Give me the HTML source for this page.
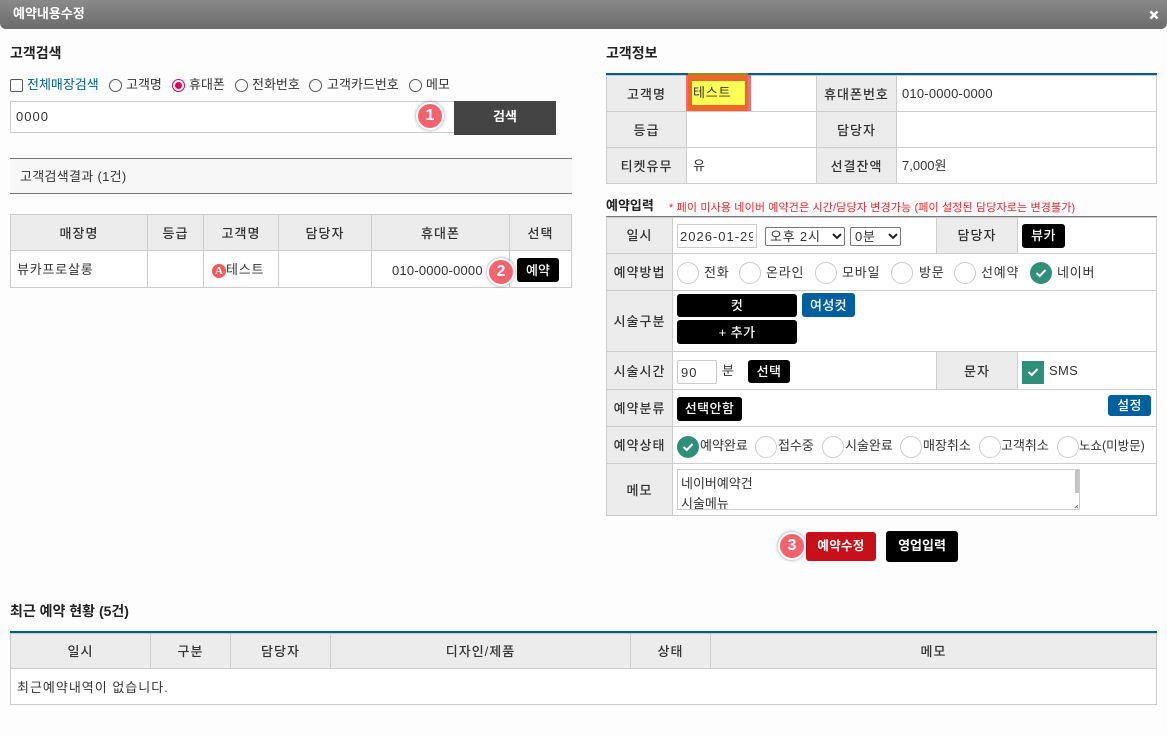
<!DOCTYPE html>
<html lang="ko"><head><meta charset="utf-8"><title>예약내용수정</title>
<style>
html,body{margin:0;padding:0;width:1167px;height:735px;overflow:hidden;background:#fdfdfd}
body{position:relative;font-family:"Liberation Sans","Noto Sans CJK KR",sans-serif;font-size:13px;color:#333}
div{position:absolute;box-sizing:border-box;white-space:nowrap}
.t{line-height:18px;height:18px;margin-top:1px}
.l{letter-spacing:.8px}
.b{font-weight:700;color:#222;font-size:14px}
.c{background:#fff;border:1px solid #ccc}
.h{background:#ececec;border:1px solid #ccc;text-align:center;color:#333;font-weight:500;letter-spacing:1px;padding-top:1px}
.btn{background:#000;color:#fff;border-radius:3px;text-align:center;font-weight:500;letter-spacing:.4px}
.blue{background:#005f9e;color:#fff;border-radius:3px;text-align:center;font-weight:500;letter-spacing:.4px}
.r{width:22px;height:22px;border-radius:50%;border:1px solid #ccc;background:#fff}
.g{width:22px;height:22px;border-radius:50%;background:#2f8f77}
.g svg,.s svg{position:absolute;left:5px;top:6px}
.s{width:22px;height:23px;background:#2f8f77}
.n{width:28px;height:28px;border-radius:50%;background:#f2636d;border:2px solid #fff;box-shadow:0 0 3px rgba(0,0,0,.45);color:#fff;font-weight:700;font-size:16px;line-height:24px;text-align:center;z-index:5}
.rd{width:13px;height:13px;border-radius:50%;border:1px solid #555;background:#fff}
</style></head><body>

<div style="left:0;top:0;width:1167px;height:29px;background:linear-gradient(#8a8a8a,#6b6b6b);border-radius:0 0 6px 6px"></div>
<div class="t" style="left:13px;top:4px;color:#fff;font-weight:700;font-size:13px">예약내용수정</div>
<svg style="position:absolute;left:1149px;top:10px" width="10" height="10"><path d="M1.5 1.5L8.5 8.5M8.5 1.5L1.5 8.5" stroke="#fff" stroke-width="2.6"/></svg>

<!-- left -->
<div class="t b" style="left:10px;top:43px">고객검색</div>
<div style="left:10px;top:79px;width:13px;height:13px;border:1px solid #555;border-radius:2px;background:#fff"></div>
<div class="t" style="left:27px;top:75px;color:#005f8e">전체매장검색</div>
<div class="rd" style="left:109px;top:79px"></div><div class="t" style="left:126px;top:75px">고객명</div>
<div class="rd" style="left:172px;top:79px;border:1px solid #d6005a"></div><div style="left:175px;top:82px;width:7px;height:7px;border-radius:50%;background:#e0005e"></div><div class="t" style="left:189px;top:75px">휴대폰</div>
<div class="rd" style="left:235px;top:79px"></div><div class="t" style="left:252px;top:75px">전화번호</div>
<div class="rd" style="left:309px;top:79px"></div><div class="t" style="left:327px;top:75px">고객카드번호</div>
<div class="rd" style="left:409px;top:79px"></div><div class="t" style="left:426px;top:75px">메모</div>

<div class="c" style="left:10px;top:101px;width:445px;height:32px;padding-left:5px;line-height:29px;color:#333;letter-spacing:1px">0000</div>
<div style="left:454px;top:101px;width:102px;height:34px;background:#444;color:#fff;text-align:center;line-height:32px;font-weight:700;font-size:13px">검색</div>
<div class="n" style="left:416px;top:102px">1</div>

<div style="left:10px;top:158px;width:562px;height:36px;background:#f7f7f7;border-top:1px solid #777;border-bottom:1px solid #777;padding-left:10px;line-height:35px;font-size:13px;letter-spacing:.3px">고객검색결과 (1건)</div>

<div class="h" style="left:10px;top:214px;width:138px;height:37px;line-height:35px">매장명</div>
<div class="h" style="left:147px;top:214px;width:57px;height:37px;line-height:35px">등급</div>
<div class="h" style="left:203px;top:214px;width:76px;height:37px;line-height:35px">고객명</div>
<div class="h" style="left:278px;top:214px;width:94px;height:37px;line-height:35px">담당자</div>
<div class="h" style="left:371px;top:214px;width:139px;height:37px;line-height:35px">휴대폰</div>
<div class="h" style="left:509px;top:214px;width:63px;height:37px;line-height:35px">선택</div>
<div class="c" style="left:10px;top:250px;width:138px;height:38px;padding-left:6px;line-height:38px;letter-spacing:.8px">뷰카프로살롱</div>
<div class="c" style="left:147px;top:250px;width:57px;height:38px"></div>
<div class="c" style="left:203px;top:250px;width:76px;height:38px"></div>
<div class="c" style="left:278px;top:250px;width:94px;height:38px"></div>
<div class="c" style="left:371px;top:250px;width:139px;height:38px"></div>
<div class="c" style="left:509px;top:250px;width:63px;height:38px"></div>
<div style="left:212px;top:264px;width:14px;height:14px;border-radius:50%;background:#ef5a5a;color:#fff;font:700 11px/14px 'Liberation Serif',serif;text-align:center">A</div>
<div class="t l" style="left:226px;top:260px">테스트</div>
<div class="t" style="left:392px;top:261px;letter-spacing:.2px">010-0000-0000</div>
<div class="btn" style="left:517px;top:258px;width:42px;height:24px;line-height:25px;font-size:13px;letter-spacing:0">예약</div>
<div class="n" style="left:487px;top:258px">2</div>

<!-- customer info -->
<div class="t b" style="left:606px;top:43px">고객정보</div>
<div class="h" style="left:606px;top:75px;width:81px;height:37px;line-height:35px">고객명</div>
<div class="c" style="left:686px;top:75px;width:131px;height:37px"></div>
<div class="h" style="left:816px;top:75px;width:81px;height:37px;line-height:35px">휴대폰번호</div>
<div class="c" style="left:896px;top:75px;width:261px;height:37px;padding-left:5px;line-height:36px;font-size:13px;letter-spacing:.2px">010-0000-0000</div>
<div class="h" style="left:606px;top:111px;width:81px;height:37px;line-height:35px">등급</div>
<div class="c" style="left:686px;top:111px;width:131px;height:37px"></div>
<div class="h" style="left:816px;top:111px;width:81px;height:37px;line-height:35px">담당자</div>
<div class="c" style="left:896px;top:111px;width:261px;height:37px"></div>
<div class="h" style="left:606px;top:147px;width:81px;height:37px;line-height:35px">티켓유무</div>
<div class="c" style="left:686px;top:147px;width:131px;height:37px;padding-left:6px;line-height:35px">유</div>
<div class="h" style="left:816px;top:147px;width:81px;height:37px;line-height:35px">선결잔액</div>
<div class="c" style="left:896px;top:147px;width:261px;height:37px;padding-left:5px;line-height:35px;font-size:13px">7,000원</div>
<div style="left:606px;top:73px;width:551px;height:2px;background:#005b8e"></div>
<div style="left:686px;top:75px;width:65px;height:36px;background:#e8707a"></div>
<div style="left:688px;top:73px;width:60px;height:38px;background:#f0662a"></div>
<div style="left:688px;top:73px;width:60px;height:2px;background:#7d9a1e"></div>
<div style="left:692px;top:81px;width:53px;height:24px;background:#ffff55;padding-left:1px;line-height:24px;color:#333;letter-spacing:.8px">테스트</div>

<!-- reservation input -->
<div class="t b" style="left:606px;top:196px;font-size:13px">예약입력</div>
<div class="t" style="left:669px;top:198px;color:#e8262c;font-size:11px;letter-spacing:.14px">* 페이 미사용 네이버 예약건은 시간/담당자 변경가능 (페이 설정된 담당자로는 변경불가)</div>

<div class="h" style="left:606px;top:217px;width:67px;height:37px;line-height:34px">일시</div>
<div class="c" style="left:672px;top:217px;width:265px;height:37px"></div>
<div class="h" style="left:936px;top:217px;width:82px;height:37px;line-height:34px">담당자</div>
<div class="c" style="left:1017px;top:217px;width:140px;height:37px"></div>
<div style="left:606px;top:216px;width:551px;height:1px;background:#777"></div>

<div class="h" style="left:606px;top:253px;width:67px;height:38px;line-height:36px">예약방법</div>
<div class="c" style="left:672px;top:253px;width:485px;height:38px"></div>
<div class="h" style="left:606px;top:290px;width:67px;height:62px;line-height:60px">시술구분</div>
<div class="c" style="left:672px;top:290px;width:485px;height:62px"></div>
<div class="h" style="left:606px;top:351px;width:67px;height:39px;line-height:37px">시술시간</div>
<div class="c" style="left:672px;top:351px;width:265px;height:39px"></div>
<div class="h" style="left:936px;top:351px;width:82px;height:39px;line-height:37px">문자</div>
<div class="c" style="left:1017px;top:351px;width:140px;height:39px"></div>
<div class="h" style="left:606px;top:389px;width:67px;height:38px;line-height:36px">예약분류</div>
<div class="c" style="left:672px;top:389px;width:485px;height:38px"></div>
<div class="h" style="left:606px;top:426px;width:67px;height:38px;line-height:36px">예약상태</div>
<div class="c" style="left:672px;top:426px;width:485px;height:38px"></div>
<div class="h" style="left:606px;top:463px;width:67px;height:53px;line-height:51px">메모</div>
<div class="c" style="left:672px;top:463px;width:485px;height:53px"></div>

<div class="c" style="left:677px;top:224px;width:80px;height:24px"><div style="left:2px;top:0;width:73px;height:22px;line-height:23px;overflow:hidden;letter-spacing:1px">2026-01-29</div></div>
<div style="left:765px;top:227px;width:80px;height:19px;background:#fff;border:1px solid #777;border-radius:2px;padding-left:4px;line-height:18px;letter-spacing:.8px">오후 2시</div>
<svg style="position:absolute;left:832px;top:233px" width="10" height="7"><path d="M1 1L5 5L9 1" fill="none" stroke="#222" stroke-width="2"/></svg>
<div style="left:850px;top:227px;width:51px;height:19px;background:#fff;border:1px solid #777;border-radius:2px;padding-left:4px;line-height:18px;letter-spacing:.8px">0분</div>
<svg style="position:absolute;left:888px;top:233px" width="10" height="7"><path d="M1 1L5 5L9 1" fill="none" stroke="#222" stroke-width="2"/></svg>
<div class="btn" style="left:1022px;top:224px;width:43px;height:24px;line-height:24px">뷰카</div>

<div class="r" style="left:677px;top:262px"></div><div class="t l" style="left:704px;top:263px">전화</div>
<div class="r" style="left:739px;top:262px"></div><div class="t l" style="left:766px;top:263px">온라인</div>
<div class="r" style="left:815px;top:262px"></div><div class="t l" style="left:842px;top:263px">모바일</div>
<div class="r" style="left:891px;top:262px"></div><div class="t l" style="left:919px;top:263px">방문</div>
<div class="r" style="left:954px;top:262px"></div><div class="t l" style="left:981px;top:263px">선예약</div>
<div class="g" style="left:1030px;top:262px"><svg width="12" height="10"><path d="M1.5 5L4.8 8L10.5 2" fill="none" stroke="#fff" stroke-width="2"/></svg></div><div class="t l" style="left:1057px;top:263px">네이버</div>

<div class="btn" style="left:677px;top:294px;width:120px;height:23px;line-height:24px">컷</div>
<div class="blue" style="left:802px;top:293px;width:53px;height:24px;line-height:25px">여성컷</div>
<div class="btn" style="left:677px;top:320px;width:120px;height:24px;line-height:25px">+ 추가</div>

<div style="left:677px;top:360px;width:40px;height:24px;background:#fff;border:1px solid #ccc;border-radius:2px;padding-left:3px;line-height:23px;letter-spacing:1px">90</div>
<div class="t" style="left:722px;top:361px">분</div>
<div class="btn" style="left:748px;top:360px;width:42px;height:23px;line-height:24px">선택</div>
<div class="s" style="left:1022px;top:361px"><svg width="12" height="10"><path d="M1.5 5L4.8 8L10.5 2" fill="none" stroke="#fff" stroke-width="2"/></svg></div>
<div class="t" style="left:1049px;top:361px;letter-spacing:.3px">SMS</div>

<div class="btn" style="left:677px;top:397px;width:65px;height:24px;line-height:24px">선택안함</div>
<div class="blue" style="left:1108px;top:395px;width:43px;height:21px;line-height:22px">설정</div>

<div class="g" style="left:677px;top:436px"><svg width="12" height="10"><path d="M1.5 5L4.8 8L10.5 2" fill="none" stroke="#fff" stroke-width="2"/></svg></div><div class="t" style="left:700px;top:436px">예약완료</div>
<div class="r" style="left:755px;top:436px"></div><div class="t" style="left:778px;top:436px">접수중</div>
<div class="r" style="left:822px;top:436px"></div><div class="t" style="left:845px;top:436px">시술완료</div>
<div class="r" style="left:900px;top:436px"></div><div class="t" style="left:923px;top:436px">매장취소</div>
<div class="r" style="left:979px;top:436px"></div><div class="t" style="left:1001px;top:436px">고객취소</div>
<div class="r" style="left:1057px;top:436px"></div><div class="t" style="left:1079px;top:436px;font-size:12.5px">노쇼(미방문)</div>

<div style="left:677px;top:469px;width:403px;height:41px;background:#fff;border:1px solid #ccc;padding:4px 3px;line-height:20px;overflow:hidden;font-size:13px">네이버예약건<br>시술메뉴</div>
<div style="left:1075px;top:470px;width:4px;height:23px;background:#c4c4c4"></div>
<svg style="position:absolute;left:1074px;top:504px" width="5" height="5"><path d="M1 4L4 1M3 4L4 3" stroke="#777" stroke-width="1" fill="none"/></svg>

<div class="n" style="left:778px;top:532px">3</div>
<div style="left:806px;top:532px;width:70px;height:29px;background:#c8101a;color:#fff;border-radius:3px;text-align:center;line-height:28px;font-weight:700;font-size:12.5px;letter-spacing:.3px">예약수정</div>
<div class="btn" style="left:886px;top:531px;width:72px;height:31px;line-height:30px;font-weight:700;font-size:13px;letter-spacing:0">영업입력</div>

<!-- recent -->
<div class="t b" style="left:10px;top:601px">최근 예약 현황 (5건)</div>
<div class="h" style="left:10px;top:633px;width:141px;height:36px;line-height:34px">일시</div>
<div class="h" style="left:150px;top:633px;width:81px;height:36px;line-height:34px">구분</div>
<div class="h" style="left:230px;top:633px;width:101px;height:36px;line-height:34px">담당자</div>
<div class="h" style="left:330px;top:633px;width:301px;height:36px;line-height:34px">디자인/제품</div>
<div class="h" style="left:630px;top:633px;width:81px;height:36px;line-height:34px">상태</div>
<div class="h" style="left:710px;top:633px;width:447px;height:36px;line-height:34px">메모</div>
<div style="left:10px;top:631px;width:1147px;height:2px;background:#005b8e"></div>
<div class="c" style="left:10px;top:668px;width:1147px;height:37px;padding-left:6px;line-height:37px;font-size:13px;letter-spacing:1px">최근예약내역이 없습니다.</div>
</body></html>
